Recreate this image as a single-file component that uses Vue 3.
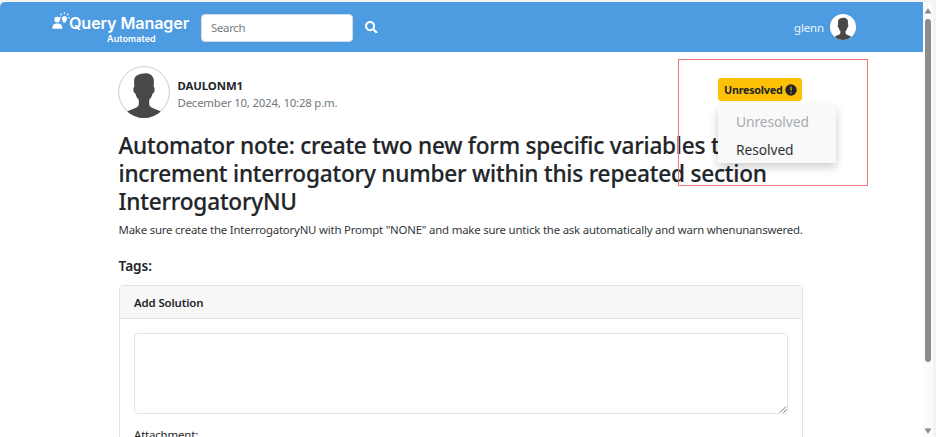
<script setup>
import { ref } from 'vue'

const user = 'glenn'
const author = 'DAULONM1'
const postedAt = 'December 10, 2024, 10:28 p.m.'
const status = ref('Unresolved')
const options = ['Unresolved', 'Resolved']
const titleLines = [
  'Automator note: create two new form specific variables to',
  'increment interrogatory number within this repeated section',
  'InterrogatoryNU',
]
</script>

<template>
  <div class="window">
    <div class="page">
      <header class="navbar">
        <div class="brand">
          <svg class="brand-icon" viewBox="0 0 18 18">
            <circle cx="5.2" cy="7.6" r="2.900" />
            <path d="M.4 16.800v-1.400c0-2.500 1.800-3.900 4.200-3.900h1.400c2.400 0 4.200 1.400 4.200 3.900v1.400z" />
            <path d="M12.400 4a2.700 2.700 0 0 1 1.500 4.900v1.500h-3V8.900a2.700 2.700 0 0 1 1.500-4.900z" />
            <path class="rays" d="M12.300 .6v1.200M8.600 1.900l.9 1M16.200 1.900l-.9 1M7.700 5.600h.9M16.300 5.800h1.100" />
          </svg>
          <div class="brand-text">
            <span class="brand-name">Query Manager</span>
            <span class="brand-sub">Automated</span>
          </div>
        </div>
        <input class="search" type="text" placeholder="Search" />
        <button class="search-btn" aria-label="Search">
          <svg viewBox="0 0 512 512">
            <path d="M505 442.700L405.300 343c-4.500-4.500-10.600-7-17-7H372c27.600-35.300 44-79.700 44-128C416 93.100 322.900 0 208 0S0 93.100 0 208s93.100 208 208 208c48.300 0 92.700-16.400 128-44v16.300c0 6.400 2.500 12.500 7 17l99.700 99.700c9.400 9.400 24.600 9.400 33.900 0l28.300-28.300c9.400-9.400 9.400-24.600.1-34zM208 336c-70.700 0-128-57.200-128-128 0-70.700 57.200-128 128-128 70.700 0 128 57.200 128 128 0 70.700-57.200 128-128 128z" />
          </svg>
        </button>
        <div class="account">
          <span class="account-name">{{ user }}</span>
          <svg class="avatar small" viewBox="0 0 52 52">
            <circle cx="26" cy="26" r="26" fill="#fff" />
            <path d="M26 7.500c4.500-.8 9.600 1.500 9.900 7.500l-.2 6c1.200.2 1.100 2.400.7 4-.4 1.500-1 2.300-1.700 2.300-.6 3-1.900 5-3.500 6.700v4.200c0 3.600 6.700 4.600 11.500 7.200Q35.500 52 26 52T9.300 45.400c4.800-2.600 11.500-3.600 11.500-7.200V34c-1.600-1.700-2.900-3.700-3.500-6.700-.7 0-1.300-.8-1.700-2.300-.4-1.600-.5-3.800.7-4l-.2-6c.1-4.500 2.900-7 9.900-7.500z" fill="#484848" />
          </svg>
        </div>
      </header>

      <main class="content">
        <div class="post-head">
          <svg class="avatar" viewBox="0 0 52 52">
            <circle cx="26" cy="26" r="25.400" fill="#fff" stroke="#ccc" />
            <path d="M26 7.500c4.500-.8 9.600 1.500 9.900 7.500l-.2 6c1.200.2 1.100 2.400.7 4-.4 1.500-1 2.300-1.700 2.300-.6 3-1.900 5-3.500 6.700v4.200c0 3.600 6.700 4.600 11.500 7.200Q35.500 52 26 52T9.300 45.400c4.800-2.600 11.500-3.600 11.500-7.200V34c-1.600-1.700-2.900-3.700-3.500-6.700-.7 0-1.300-.8-1.700-2.300-.4-1.600-.5-3.800.7-4l-.2-6c.1-4.500 2.900-7 9.900-7.500z" fill="#484848" />
          </svg>
          <div class="post-meta">
            <span class="author">{{ author }}</span>
            <span class="date">{{ postedAt }}</span>
          </div>
          <div class="status">
            <button class="status-btn">
              <span class="status-label">{{ status }}</span>
              <svg viewBox="0 0 12 12">
                <circle cx="6" cy="6" r="5.700" fill="#212529" />
                <path d="M5.200 2.600h1.600L6.600 6.900H5.400z" fill="#c99c13" />
                <circle cx="6" cy="8.700" r=".8" fill="#c99c13" />
              </svg>
            </button>
            <ul class="menu">
              <li v-for="o in options" :key="o" :class="{ disabled: o === status }"><span>{{ o }}</span></li>
            </ul>
          </div>
        </div>

        <h1 class="title">
          <span v-for="(line, i) in titleLines" :key="i" :class="'line-' + i">{{ line }}</span>
        </h1>
        <p class="body"><span>Make sure create the InterrogatoryNU with Prompt "NONE" and make sure untick the ask automatically and warn whenunanswered.</span></p>
        <h2 class="tags">Tags:</h2>

        <section class="card">
          <div class="card-head">Add Solution</div>
          <div class="card-body">
            <div class="textarea">
              <svg viewBox="0 0 8 8"><path d="M1 7.500L7 1.500M4.500 7.500L7.500 4.500" /></svg>
            </div>
            <label class="attachment">Attachment:</label>
          </div>
        </section>
      </main>
      <div class="highlight"></div>
    </div>
    <div class="scrollbar">
      <svg class="arrow" viewBox="0 0 8 6"><path d="M4 .3L7.500 5.600H.5z" /></svg>
      <div class="thumb"></div>
      <svg class="arrow" viewBox="0 0 8 6"><path d="M4 5.700L7.500 .4H.5z" /></svg>
    </div>
  </div>
</template>

<style>
body {
  margin: 0;
  overflow: hidden;
}
</style>

<style scoped>
* {
  box-sizing: border-box;
}
.window {
  display: flex;
  width: 936px;
  height: 437px;
  padding-top: 2px;
  overflow: hidden;
  background: #f3f3f3;
  color: #212529;
  font-family: "Noto Sans", "Open Sans", sans-serif;
  white-space: nowrap;
}
.page {
  position: relative;
  width: 923px;
  height: 435px;
  overflow: hidden;
  background: #fff;
  border-top-left-radius: 5px;
}
.navbar {
  display: flex;
  align-items: center;
  height: 50px;
  padding: 0 67px 0 52px;
  background: #4d9be1;
  color: #fff;
}
.brand {
  display: flex;
  width: 149px;
  height: 50px;
  padding-top: 10px;
}
.brand-icon {
  width: 18px;
  height: 18px;
  margin-right: -1px;
  fill: #fff;
}
.rays {
  stroke: #fff;
  stroke-width: 1.1;
  stroke-linecap: round;
}
.brand-text {
  display: flex;
  flex-direction: column;
  font-family: Inter, sans-serif;
}
.brand-name {
  font-size: 16.2px;
  font-weight: 600;
  line-height: 22px;
  letter-spacing: -0.14px;
}
.brand-sub {
  padding-left: 38px;
  font-size: 9px;
  font-weight: 600;
  line-height: 9px;
  letter-spacing: 0.1px;
}
.search {
  width: 152px;
  height: 28px;
  margin-top: 1px;
  padding: 0 9px;
  border: 1px solid #d4dce4;
  border-radius: 4px;
  background: #fff;
  font: 11.4px "Noto Sans", sans-serif;
  letter-spacing: -0.3px;
}
.search::placeholder {
  color: #757b81;
  opacity: 1;
}
.search-btn {
  display: flex;
  margin-left: 12px;
  padding: 0;
  border: 0;
  background: none;
}
.search-btn svg {
  width: 12.500px;
  height: 12.500px;
  fill: #fff;
}
.account {
  display: flex;
  align-items: center;
  gap: 6px;
  margin-left: auto;
}
.account-name {
  padding-top: 1px;
  font-size: 11.400px;
  letter-spacing: -0.1px;
  color: #eef6fd;
}
.avatar {
  flex: none;
  width: 52px;
  height: 52px;
}
.avatar.small {
  width: 26px;
  height: 26px;
}
.content {
  width: 684px;
  margin-left: 118px;
  padding-top: 14px;
}
.post-head {
  display: flex;
  height: 53px;
}
.post-meta {
  display: flex;
  flex-direction: column;
  padding: 10px 0 0 7.500px;
}
.author {
  padding-top: 1px;
  font-size: 11.400px;
  font-weight: 700;
  line-height: 17px;
  letter-spacing: -0.100px;
}
.date {
  font-size: 11.400px;
  line-height: 18px;
  letter-spacing: -0.190px;
  color: #6f777e;
}
.status {
  position: relative;
  margin: 12px 0 0 auto;
}
.status-btn {
  display: flex;
  align-items: center;
  justify-content: space-between;
  width: 84px;
  height: 23px;
  padding: 0 5px 0 6px;
  border: 0;
  border-radius: 3px;
  background: #ffc107;
  color: #212529;
  font: 700 10.800px "Noto Sans", sans-serif;
  letter-spacing: -0.260px;
}
.status-btn svg {
  width: 12px;
  height: 12px;
}
.menu {
  position: absolute;
  top: 28px;
  left: 0;
  z-index: 2;
  width: 118px;
  margin: 0;
  padding: 2px 0 0;
  height: 57px;
  list-style: none;
  background: #f9f9f9;
  box-shadow: 0 4px 9px rgba(0, 0, 0, 0.2);
}
.menu li {
  padding-left: 18px;
  font-size: 13.800px;
  line-height: 28px;
  letter-spacing: -0.080px;
  color: #2f3438;
}
.menu li.disabled {
  color: #a7abaf;
}
.title {
  display: flex;
  flex-direction: column;
  margin: 13px 0 0;
  padding-left: 0.500px;
  font-size: 22.600px;
  font-weight: 500;
  line-height: 28px;
  -webkit-text-stroke: 0.2px #212529;
}
.title span {
  align-self: flex-start;
  letter-spacing: -0.200px;
}
.title .line-0 {
  letter-spacing: -0.220px;
}
.body {
  margin: 4px 0 0;
  padding-left: 0.500px;
  font-size: 11.400px;
  line-height: 20px;
  letter-spacing: -0.195px;
  color: #33383c;
}
.tags {
  margin: 16px 0 0;
  padding-left: 0.500px;
  font-size: 13.600px;
  font-weight: 600;
  line-height: 20px;
}
.card {
  margin: 9px -1px 0 1px;
  height: 200px;
  border: 1px solid #e2e2e2;
  border-radius: 4px;
}
.card-head {
  height: 33px;
  padding-left: 14px;
  border-bottom: 1px solid #e2e2e2;
  background: #f7f7f7;
  font-size: 11.400px;
  font-weight: 600;
  line-height: 34px;
  letter-spacing: -0.120px;
}
.card-body {
  padding: 14px 14px 0;
}
.textarea {
  display: flex;
  align-items: flex-end;
  justify-content: flex-end;
  height: 81px;
  border: 1px solid #e2e4e6;
  border-radius: 4px;
}
.textarea svg {
  width: 8px;
  height: 8px;
  fill: none;
  stroke: #777;
}
.attachment {
  display: block;
  margin-top: 12px;
  font-size: 11.400px;
  line-height: 18px;
  letter-spacing: -0.150px;
}
.highlight {
  position: absolute;
  top: 57px;
  left: 678px;
  z-index: 3;
  width: 190px;
  height: 127px;
  border: 1px solid #ee787b;
  pointer-events: none;
}
.scrollbar {
  display: flex;
  flex-direction: column;
  align-items: center;
  width: 10px;
  height: 435px;
  padding: 6px 0 3px;
  background: #fbfbfb;
  border-top-right-radius: 4px;
}
.arrow {
  flex: none;
  width: 8px;
  height: 6px;
  fill: #888;
}
.thumb {
  width: 6px;
  height: 343px;
  margin: 5px 0 auto;
  border-radius: 3px;
  background: #8b8b8b;
}
</style>
